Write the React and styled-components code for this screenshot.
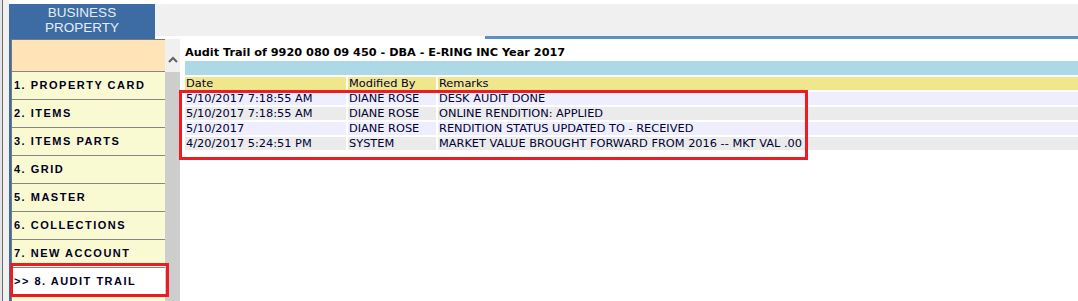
import React from "react";
import styled, { createGlobalStyle } from "styled-components";

const Global = createGlobalStyle`
  html, body { margin: 0; padding: 0; background: #ffffff; overflow: hidden; }
  #root { width: 1078px; height: 301px; }
`;

const Page = styled.div`
  display: flex;
  width: 1078px;
  height: 301px;
  overflow: hidden;
  background: #ffffff;
`;

const LeftEdge = styled.div`
  width: 9px;
  flex: none;
  background: #f0f0f0;
  box-shadow: inset 2px 0 0 #e4e4e4, inset 3px 0 0 #6c6c6c;
`;

const Main = styled.div`
  flex: 1;
  display: flex;
  flex-direction: column;
  min-width: 0;
`;

const TabStrip = styled.div`
  display: flex;
  margin-top: 4px;
  height: 35px;
  flex: none;
`;

const Tab = styled.div`
  width: 146px;
  flex: none;
  background: #3c6ca3;
  color: #e6edf6;
  font-family: "Liberation Sans", Arial, sans-serif;
  font-size: 13.5px;
  line-height: 15.4px;
  text-align: center;
  padding-top: 1px;
  box-sizing: border-box;
`;

const StripFill = styled.div`
  flex: 1;
  display: flex;
  flex-direction: column;
`;

const StripGray = styled.div`
  height: 32px;
  background: #f0f0f0;
`;

const StripLine = styled.div`
  height: 3px;
  margin-left: 330px;
  background: #5b8fc7;
`;

const Body = styled.div`
  flex: 1;
  display: flex;
  min-height: 0;
`;

const Sidebar = styled.div`
  width: 156px;
  flex: none;
  border-left: 2px solid #3c6ca3;
  box-sizing: border-box;
  display: flex;
`;

const List = styled.div`
  flex: 1;
  border-top: 1px solid #7a7a7a;
  border-left: 1px solid #7a7a7a;
  background: #fafad2;
  display: flex;
  flex-direction: column;
`;

const ListHead = styled.div`
  height: 31px;
  background: #fee4b6;
  flex: none;
`;

const Item = styled.div`
  position: relative;
  height: 28px;
  flex: none;
  border-top: 1px solid #858585;
  background: ${(p) => (p.$active ? "#ffffff" : "#fafad2")};
  display: flex;
  align-items: center;
  padding-left: 2px;
  padding-bottom: 1px;
  box-sizing: border-box;
  font-family: "Liberation Sans", Arial, sans-serif;
  font-weight: bold;
  font-size: 11px;
  letter-spacing: 1.5px;
  color: #00001e;
  white-space: nowrap;
`;

const ItemMark = styled.div`
  position: absolute;
  left: -2px;
  top: -5px;
  width: 159px;
  height: 34px;
  border: 3px solid #ed1c24;
  box-sizing: border-box;
  pointer-events: none;
`;

const Scroll = styled.div`
  width: 15px;
  flex: none;
  display: flex;
  flex-direction: column;
  background: #cdcdcd;
`;

const ScrollButton = styled.div`
  height: 33px;
  background: #f0f0f0;
  display: flex;
  justify-content: center;
  padding-top: 17px;
  box-sizing: border-box;
`;

const Content = styled.div`
  position: relative;
  flex: 1;
  padding-left: 3px;
  min-width: 0;
`;

const Title = styled.div`
  padding-top: 7px;
  padding-left: 2px;
  font-family: "DejaVu Sans", Verdana, sans-serif;
  font-weight: bold;
  font-size: 11.27px;
  line-height: 13px;
  color: #000000;
  white-space: nowrap;
`;

const Table = styled.table`
  border-collapse: separate;
  border-spacing: 2px;
  table-layout: fixed;
  width: 897px;
  font-family: "DejaVu Sans", Verdana, sans-serif;
  font-size: 11.35px;
  line-height: 13px;
  color: #000033;
`;

const BlueCell = styled.td`
  height: 14px;
  padding: 0;
  background: #add8e6;
`;

const Cell = styled.td`
  height: 13px;
  padding: 0 0 0 1px;
  white-space: nowrap;
  overflow: hidden;
  background: ${(p) => p.$bg};
`;

const RowMark = styled.div`
  position: absolute;
  left: -1px;
  top: 51px;
  width: 629px;
  height: 70px;
  border: 3px solid #ed1c24;
  box-sizing: border-box;
  pointer-events: none;
`;

const items = [
  "1. PROPERTY CARD",
  "2. ITEMS",
  "3. ITEMS PARTS",
  "4. GRID",
  "5. MASTER",
  "6. COLLECTIONS",
  "7. NEW ACCOUNT",
  ">> 8. AUDIT TRAIL",
];

const rows = [
  ["5/10/2017 7:18:55 AM", "DIANE ROSE", "DESK AUDIT DONE"],
  ["5/10/2017 7:18:55 AM", "DIANE ROSE", "ONLINE RENDITION: APPLIED"],
  ["5/10/2017", "DIANE ROSE", "RENDITION STATUS UPDATED TO - RECEIVED"],
  ["4/20/2017 5:24:51 PM", "SYSTEM", "MARKET VALUE BROUGHT FORWARD FROM 2016 -- MKT VAL .00"],
];

export default function App() {
  return (
    <>
      <Global />
      <Page>
        <LeftEdge />
        <Main>
          <TabStrip>
            <Tab>
              BUSINESS
              <br />
              PROPERTY
            </Tab>
            <StripFill>
              <StripGray />
              <StripLine />
            </StripFill>
          </TabStrip>
          <Body>
            <Sidebar>
              <List>
                <ListHead />
                {items.map((t, i) => (
                  <Item key={t} $active={i === items.length - 1}>
                    {t}
                    {i === items.length - 1 && <ItemMark />}
                  </Item>
                ))}
              </List>
            </Sidebar>
            <Scroll>
              <ScrollButton>
                <svg width="10" height="7" viewBox="0 0 10 7">
                  <polyline
                    points="1,6 5,2 9,6"
                    fill="none"
                    stroke="#606060"
                    strokeWidth="2"
                  />
                </svg>
              </ScrollButton>
            </Scroll>
            <Content>
              <Title>Audit Trail of 9920 080 09 450 - DBA - E-RING INC Year 2017</Title>
              <Table>
                <colgroup>
                  <col style={{ width: "161px" }} />
                  <col style={{ width: "88px" }} />
                  <col />
                </colgroup>
                <tbody>
                  <tr>
                    <BlueCell colSpan={3} />
                  </tr>
                  <tr>
                    <Cell $bg="#f0e68c">Date</Cell>
                    <Cell $bg="#f0e68c">Modified By</Cell>
                    <Cell $bg="#f0e68c">Remarks</Cell>
                  </tr>
                  {rows.map((r, i) => (
                    <tr key={i}>
                      {r.map((c, j) => (
                        <Cell key={j} $bg={i % 2 === 0 ? "#eeeeff" : "#ebebeb"}>
                          {c}
                        </Cell>
                      ))}
                    </tr>
                  ))}
                </tbody>
              </Table>
              <RowMark />
            </Content>
          </Body>
        </Main>
      </Page>
    </>
  );
}
